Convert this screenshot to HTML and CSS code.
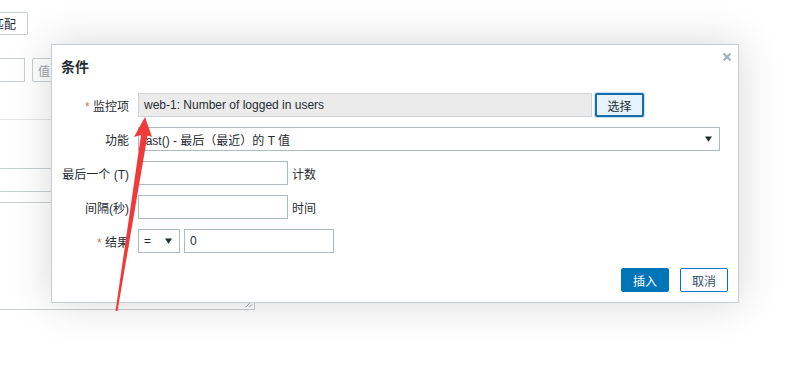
FILE: index.html
```html
<!DOCTYPE html>
<html lang="zh-CN">
<head>
    <meta charset="UTF-8">
    <meta name="viewport" content="width=device-width, initial-scale=1.0">
    <title>条件</title>
    <link rel="stylesheet" href="styles.css">
</head>
<body>
    <!-- Página de fondo, parcialmente tapada por el diálogo -->
    <div class="page">
        <div class="bg-row bg-top">
            <button class="bg-btn">匹配</button>
        </div>
        <div class="bg-row bg-second">
            <input class="bg-input" type="text">
            <button class="bg-btn bg-muted">值</button>
        </div>
        <div class="bg-sep"></div>
        <input class="bg-input bg-wide" type="text">
        <div class="bg-textarea">
            <svg class="resize-grip" viewBox="0 0 10 10">
                <path d="M2 9 L9 2 M6 9 L9 6" stroke="#8a969e" stroke-width="1" fill="none"/>
            </svg>
        </div>
    </div>

    <!-- Diálogo de condición -->
    <div class="dialog">
        <div class="dialog-header">
            <h4 class="dialog-title">条件</h4>
            <button class="dialog-close" title="关闭">
                <svg viewBox="0 0 10 10">
                    <path d="M1.5 1.5 L8.5 8.5 M8.5 1.5 L1.5 8.5" stroke="currentColor" stroke-width="2.2" fill="none"/>
                </svg>
            </button>
        </div>

        <div class="dialog-body">
            <div class="form-row">
                <label class="form-label"><span class="required">*</span> 监控项</label>
                <div class="form-field">
                    <div class="input input-readonly input-item">web-1: Number of logged in users</div>
                    <button class="btn-select">选择</button>
                </div>
            </div>

            <div class="form-row">
                <label class="form-label">功能</label>
                <div class="form-field">
                    <div class="select select-function">
                        <span>last() - 最后（最近）的 T 值</span>
                        <svg class="caret" viewBox="0 0 8 6"><path d="M0 0 H8 L4 6 Z" fill="#1f2c33"/></svg>
                    </div>
                </div>
            </div>

            <div class="form-row">
                <label class="form-label">最后一个 (T)</label>
                <div class="form-field">
                    <div class="input input-short"></div>
                    <span class="field-hint">计数</span>
                </div>
            </div>

            <div class="form-row">
                <label class="form-label">间隔(秒)</label>
                <div class="form-field">
                    <div class="input input-short"></div>
                    <span class="field-hint">时间</span>
                </div>
            </div>

            <div class="form-row">
                <label class="form-label"><span class="required">*</span> 结果</label>
                <div class="form-field">
                    <div class="select select-operator">
                        <span>=</span>
                        <svg class="caret" viewBox="0 0 8 6"><path d="M0 0 H8 L4 6 Z" fill="#1f2c33"/></svg>
                    </div>
                    <div class="input input-short">0</div>
                </div>
            </div>
        </div>

        <div class="dialog-footer">
            <button class="btn btn-primary">插入</button>
            <button class="btn btn-alt">取消</button>
        </div>
    </div>

    <!-- Flecha roja de anotación -->
    <svg class="annotation" viewBox="0 0 792 375" width="792" height="375">
        <polygon points="145,117 152,137 147.5,135.5 117.5,311 115.5,311 141,135 134,137" fill="#f2393a"/>
    </svg>
</body>
</html>
```

FILE: styles.css
```css
/* Reset básico */
* {
    margin: 0;
    padding: 0;
    box-sizing: border-box;
}

body {
    font-family: "Liberation Sans", Arial, "Noto Sans CJK SC", sans-serif;
    font-size: 12px;
    color: #1f2c33;
    background: #fff;
    width: 792px;
    height: 375px;
    overflow: hidden;
    position: relative;
}

button {
    font-family: inherit;
    font-size: 12px;
}

/* Página de fondo */
.page {
    padding-top: 12px;
}

.bg-row {
    display: flex;
    gap: 7px;
}

.bg-top {
    margin-left: -20px;
}

.bg-second {
    margin-top: 23px;
    margin-left: -95px;
}

.bg-btn {
    height: 23px;
    padding: 0 11px;
    background: #fff;
    border: 1px solid #c8cfd3;
    border-radius: 2px;
    color: #1f2c33;
}

.bg-second .bg-btn {
    height: 24px;
}

.bg-muted {
    color: #9aa4ab;
    padding: 0 5px;
    width: 48px;
    text-align: left;
}

.bg-input {
    display: block;
    width: 120px;
    height: 24px;
    border: 1px solid #c8cfd3;
    background: #fff;
}

.bg-sep {
    margin-top: 37px;
    height: 1px;
    background: #e3e7ea;
    width: 300px;
}

.bg-wide {
    margin-top: 48px;
    margin-left: -10px;
    width: 300px;
    height: 24px;
}

.bg-textarea {
    margin-top: 10px;
    margin-left: -10px;
    width: 265px;
    height: 108px;
    border: 1px solid #c8cfd3;
    position: relative;
}

.resize-grip {
    position: absolute;
    right: 1px;
    bottom: 1px;
    width: 9px;
    height: 9px;
}

/* Diálogo */
.dialog {
    position: absolute;
    left: 51px;
    top: 44px;
    width: 688px;
    height: 259px;
    background: #fff;
    border: 1px solid #c5ced3;
    box-shadow: 0 0 40px rgba(0, 0, 0, 0.16);
    padding: 14px 10px 10px 9px;
    display: flex;
    flex-direction: column;
}

.dialog-header {
    height: 16px;
}

.dialog-title {
    font-size: 14px;
    font-weight: bold;
    line-height: 16px;
    color: #1f2c33;
}

.dialog-close {
    position: absolute;
    right: 6px;
    top: 7px;
    width: 10px;
    height: 10px;
    border: none;
    background: none;
    color: #a7b1b8;
    display: flex;
}

.dialog-close svg {
    width: 10px;
    height: 10px;
}

.dialog-body {
    margin-top: 18px;
    display: flex;
    flex-direction: column;
    gap: 10px;
}

.form-row {
    display: flex;
    align-items: center;
    gap: 9px;
    height: 24px;
}

.form-label {
    width: 68px;
    text-align: right;
    white-space: nowrap;
    color: #1f2c33;
}

.required {
    color: #e26a6a;
}

.form-field {
    display: flex;
    align-items: center;
    gap: 4px;
}

.input {
    height: 24px;
    border: 1px solid #acbbc2;
    background: #fff;
    padding: 0 5px;
    line-height: 22px;
    white-space: nowrap;
}

.input-readonly {
    background: #ebebeb;
    border-color: #cdd3d6;
}

.input-item {
    width: 454px;
}

.input-short {
    width: 150px;
}

.btn-select {
    margin-left: -1px;
    width: 49px;
    height: 24px;
    background: #e6f3fd;
    border: 2px solid #1a6ea8;
    border-radius: 2px;
    box-shadow: 0 0 0 1px #bfe0f7;
    color: #1f2c33;
}

.select {
    height: 24px;
    border: 1px solid #acbbc2;
    background: #fff;
    display: flex;
    align-items: center;
    justify-content: space-between;
    padding: 0 7px 0 4px;
}

.select-function {
    width: 582px;
}

.select-operator {
    width: 42px;
    padding-left: 5px;
}

.caret {
    width: 7px;
    height: 6px;
}

.field-hint {
    color: #1f2c33;
}

/* Pie del diálogo */
.dialog-footer {
    margin-top: auto;
    display: flex;
    justify-content: flex-end;
    gap: 11px;
}

.btn {
    width: 48px;
    height: 24px;
    border-radius: 2px;
    cursor: pointer;
}

.btn-primary {
    background: #0275b8;
    border: 1px solid #0275b8;
    color: #fff;
}

.btn-alt {
    background: #fff;
    border: 1px solid #0275b8;
    color: #2f4e69;
}

/* Anotación */
.annotation {
    position: absolute;
    left: 0;
    top: 0;
    pointer-events: none;
}
```
